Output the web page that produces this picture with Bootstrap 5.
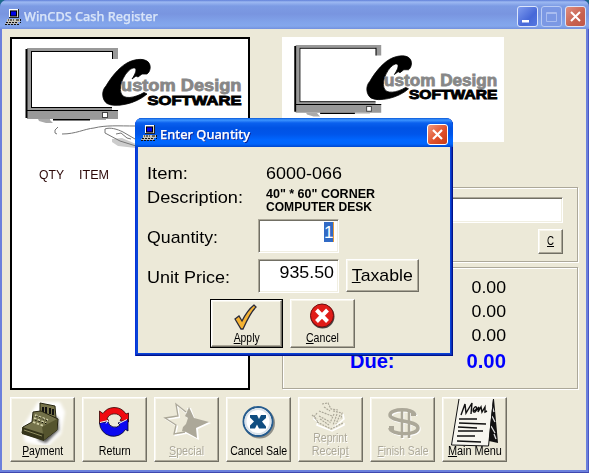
<!DOCTYPE html>
<html lang="en">
<head>
<meta charset="utf-8">
<title>WinCDS Cash Register</title>
<link href="https://cdn.jsdelivr.net/npm/bootstrap@5.3.0/dist/css/bootstrap.min.css" rel="stylesheet">
<style>
body{width:589px;height:473px;overflow:hidden;background:#1d6a8c;font-family:"Liberation Sans",Arial,sans-serif;font-size:17px;line-height:20px;color:#000}
.win{width:589px;height:473px;background:#6b80dc;border-radius:7px 7px 0 0;overflow:hidden;box-shadow:inset 0 -1px #3f48b0,inset -1px 0 #4a58c4}
.bar{height:29px;padding:0 3px 0 2px;background:linear-gradient(#5f7fd8 0,#9db9f2 2px,#7c9be4 6px,#7995e0 14px,#81a3ea 22px,#84a7ec 26px,#7391de 29px)}
.bar-icon{margin:4px 3px 0}
.cap{font-family:"Noto Sans","Open Sans",sans-serif;font-weight:500;font-size:13px;line-height:18px;margin-top:3px;color:#d8e4f8;-webkit-text-stroke:.25px currentColor}
.tbs{gap:3px}
.tb{width:21px;height:21px;border:1px solid #dbe5fb;border-radius:3px;background:linear-gradient(135deg,#7f9cee,#4668d8 60%,#5578e0)}
.tb.dim{background:#7b98e4;border-color:#b9cbf4}
.tb.x0{background:linear-gradient(135deg,#e08f80,#c7614f 60%,#c05848)}
.tb.x1{background:linear-gradient(135deg,#f0997e,#e0512c 55%,#c93a12);border-color:#fff}
.client{margin:0 3px 0 2px;width:584px;height:441px;background:#ece9d8;padding:8px}
.receipt{width:240px;height:353px;border:2px solid #000;background:#fff}
.side{width:296px}
.logo{width:222px;height:105px;background:#fff}
.etch{border:1px solid #aca899;box-shadow:1px 1px #fff,inset 1px 1px #fff}
.f1{height:75px;margin-top:45px;padding:9px 14px 0 0}
.f2{height:122px;margin-top:5px;padding:10px 71px 0 0}
.sunk{background:#fff;border:1px solid;border-color:#aca899 #fff #fff #aca899;box-shadow:inset 1px 1px #716f64,inset -1px -1px #f1efe2}
.raise{background:#ece9d8;border:1px solid;border-color:#fff #716f64 #716f64 #fff;box-shadow:inset -1px -1px #aca899,inset 1px 1px #f8f6ec;padding:1px;color:#000}
.fit{display:inline-block;white-space:nowrap;transform-origin:0 50%}
.mid .fit{transform-origin:50% 50%}
.end .fit{transform-origin:100% 50%}
.tools{gap:7px;margin-top:7px}
.tool{width:65px;height:65px}
.lab{font-size:12.5px;line-height:13px;height:13px}
.lab2{height:26px;margin-top:-13px}
.off{color:#aca899;text-shadow:1px 1px #fff}
.heads{padding:4px 0 0 27px;color:#2c0808}
.qty{width:40px}
.entry{height:26px}
.clr{width:25px;height:25px;margin-top:6px;padding-top:5px}
.sum{height:24px}
.due{color:#0000fe;font-weight:700;font-size:20px;padding:1px 0 0 67px}
u{text-underline-offset:1px;text-decoration-thickness:1px}
.dlg{position:absolute;left:135px;top:118px;width:318px;height:238px;background:#0843d8;border-radius:7px 7px 0 0;box-shadow:inset 1px 0 #0831d9,inset -1px -1px #00138c,inset -2px -2px #0a2fb8}
.dbar{height:29px;padding:0 5px 0 6px;border-radius:7px 7px 0 0;background:linear-gradient(#0a58d8 0,#3d95ff 2px,#0a60ee 5px,#0053e4 10px,#0055ea 16px,#0066ff 22px,#0065fc 26px,#0046cc 29px)}
.dbar .cap{margin-top:2px;color:#fff;text-shadow:1px 1px #0f1e8c}
.dbar-icon{margin:1px 3px 0 0}
.dcl{margin:0 3px;height:206px;background:#ece9d8;padding:17px 0 0 9px}
.r1{height:24px}
.r2{height:31px}
.r3{height:40px}
.nm{width:111px}
.r3 .nm{padding-top:9px}
.desc{font-size:12px;font-weight:700;line-height:13px;padding-left:8px}
.num{width:81px;height:34px;padding:3px 4px 2px}
.num.first{padding-top:2px}
.sel{background:#316ac5;color:#fff;width:10px;height:20px;line-height:21px;border-right:1px solid #e59a3a}
.taxb{margin-left:7px;width:73px;height:33px;padding-top:6px}
.acts{padding-left:63px;gap:7px}
.apply{border:1px solid #000;width:73px;height:49px;background:#000}
.apply .raise{width:71px;height:47px}
.cancel{width:65px;height:49px}
</style>
<script src="https://cdn.jsdelivr.net/npm/bootstrap@5.3.0/dist/js/bootstrap.bundle.min.js"></script>
</head>
<body>
<svg width="0" height="0" class="position-absolute">
<defs>
<symbol id="pc" viewBox="0 0 16 16"><path d="M4 0h10v9H4z" fill="#d4d0c8"/><path d="M4 0h9v1H5v8H4z" fill="#fff"/><path d="M5 1.500h7v6H5z" fill="#000"/><path d="M6 2.500h5v4H6z" fill="#0000e8"/><path d="M13 0h1v9H4v-1h9z" fill="#222"/><path d="M2 10h13v3H2z" fill="#c8c6bc"/><path d="M3 11h1m1 0h2m1 0h1m2 0h3" stroke="#000"/><path d="M1 13h12v2H0z" fill="#bbb"/><path d="M1 13.500h11M0 15.500h14M15.500 10v4" stroke="#111" stroke-dasharray="2 1"/></symbol>
<g id="brand">
<path d="M27 48h91v11h-6v-8H31v57h81v2h6v9H27z" fill="#999"/>
<path d="M25.500 49h2v69h-2zM31 51h81v1H32v55h80v1H31zM112 51h1v8h-1zM27 110h91v1H27z" fill="#000"/>
<path d="M102 112h6v6h-6z" fill="#444"/><path d="M103 113h4v4h-4z" fill="#fff"/>
<path d="M38 119h12v1l3 3H46l-7-2zM90 119h16v1H90z" fill="#aaa"/><path d="M53 119h37v1.500H53z"/>
<path d="M149.500 64C147 58 136 58 127 63C118 68 110 79 106 86C101 91 102 100 107 103.500C115 108 136 104 147 94L144 92.500C135 98 123 100 121 93C118 85 126 70 133 68C138 67 136 73 132 79L136 76L138 77L142 74H147C150 72 151 67 149.500 64z" stroke="#000" stroke-width=".8"/>
<text x="121" y="91" font-size="17" font-weight="700" textLength="120.500" lengthAdjust="spacingAndGlyphs" fill="#878787" stroke="#878787" stroke-width=".8">ustom Design</text>
<text x="147.500" y="105" font-size="13.500" font-weight="700" textLength="94" lengthAdjust="spacingAndGlyphs" stroke="#000" stroke-width=".9">SOFTWARE</text>
<path d="M112 139l10-1 14 6v4l-18-2-6-4z" fill="#ccc"/>
<path d="M58 127l-3 3v3l2 1M62 134c14 0 22-5 32-6 12-3 24-2 42-2M105 129c5-2 12 0 18 3l12 7M105 129v4l15 8 16 5M116 134l5-1 6 5 4 1" fill="none" stroke="#777"/>
</g>
</defs></svg>

<div class="win">
 <div class="bar d-flex align-items-center">
  <svg width="16" height="16" class="bar-icon"><use href="#pc"/></svg>
  <span class="cap"><span class="fit" data-w="134">WinCDS Cash Register</span></span>
  <div class="tbs d-flex ms-auto mt-1">
   <div class="tb"><svg width="19" height="19" class="d-block"><path d="M4 13h7v2.500H4z" fill="#fff"/></svg></div>
   <div class="tb dim"><svg width="19" height="19" class="d-block"><path d="M4.500 5.500h10v9h-10zM4.500 6.500h10" fill="none" stroke="#a9bdf0"/></svg></div>
   <div class="tb x0"><svg width="19" height="19" class="d-block"><path d="M5 5l9 9M14 5l-9 9" stroke="#fff" stroke-width="2"/></svg></div>
  </div>
 </div>
 <main class="client">
  <div class="d-flex justify-content-between">
   <section class="receipt">
    <svg width="236" height="126" viewBox="12 39 236 126" class="d-block"><use href="#brand"/></svg>
    <div class="heads d-flex lab">
     <span class="qty"><span class="fit" data-w="25">QTY</span></span><span class="fit" data-w="30">ITEM</span>
    </div>
   </section>
   <section class="side">
    <div class="logo"><svg width="222" height="105" viewBox="282 37 222 105" class="d-block"><use href="#brand" transform="translate(270.300 -.75) scale(.94 .953)"/></svg></div>
    <div class="etch f1"><div class="sunk entry"></div>
     <div class="raise lab clr ms-auto text-center mid"><span class="fit" data-w="7"><u>C</u></span></div></div>
    <div class="etch f2 text-end end">
     <div class="sum"><span class="fit" data-w="34.5">0.00</span></div>
     <div class="sum"><span class="fit" data-w="34.5">0.00</span></div>
     <div class="sum"><span class="fit" data-w="34.5">0.00</span></div>
     <div class="due d-flex justify-content-between"><span>Due:</span><span class="fit" data-w="39.5">0.00</span></div>
    </div>
   </section>
  </div>
  <nav class="tools d-flex mid">
   <div class="raise tool d-flex flex-column align-items-center">
    <svg width="61" height="46" viewBox="12 399 61 46"><defs><filter id="soft"><feGaussianBlur stdDeviation="1.500"/></filter></defs>
     <path d="M38 402h22l5 10-4 22-14 13-22-5-3-14z" fill="#fff" filter="url(#soft)"/><path d="M41 412l17 6 1 12-13 13-8-3z" fill="#555" filter="url(#soft)"/>
     <path d="M40 403l15 3 1 12-16-5z" fill="#77744b" stroke="#25240f"/><path d="M43 407v6M46 407v7M50 408v6M53 409v6" stroke="#111" stroke-width="2"/>
     <path d="M33 412l8-1 17 8-1 11-13 10-22-7 1-6 9-5z" fill="#74724a" stroke="#25240f"/>
     <path d="M42 427l15-8v11l-13 10z" fill="#55542e"/>
     <path d="M35 415l13 5M34 418l12 5M33 422l11 4" stroke="#d5d3aa" stroke-width="1.700" stroke-dasharray="2.500 1.500"/><path d="M36 416l12 5M35 420l12 4" stroke="#16150a" stroke-dasharray="1.500 2"/>
     <path d="M22 427l22 7v7l-22-7z" fill="#35341a"/><path d="M24 430l18 6" stroke="#8f8d60"/></svg>
    <div class="lab"><span class="fit" data-w="41"><u>P</u>ayment</span></div></div>
   <div class="raise tool d-flex flex-column align-items-center">
    <svg width="61" height="46" viewBox="84 399 61 46">
     <path d="M114 407.500A14 14 0 0 1 126 414L128.500 413V422L120 420.500L121.500 418A8 8 0 0 0 107 419L109 420.500L99.500 423V411L103 413.500A14 14 0 0 1 114 407.500z" fill="#f00b10" stroke="#300" stroke-width=".8"/>
     <path d="M99.500 423L108 421.500A7 7 0 0 0 120 425L118 423L128 419.500V431L125.500 429.500A14 14 0 0 1 99.500 423z" fill="#0c08f0" stroke="#002" stroke-width=".8"/><path d="M100 422.500l8-2-2 3M119 423.500l8-4" stroke="#fff" fill="none"/></svg>
    <div class="lab"><span class="fit" data-w="32">Return</span></div></div>
   <div class="raise tool d-flex flex-column align-items-center">
    <svg width="61" height="46" viewBox="156 399 61 46"><g fill="none" stroke="#fff" stroke-width="1.500" transform="translate(1.300 1.300)"><path d="M187 413l-11-9 2 12-13 2 11 7-2 9 11-2"/></g><path d="M186 407l4 0 4 11 16 4-13 6 1 11-12-6-3 0 1-6 4-9-3-2v-3l3-1z" fill="#fff" transform="translate(1 1)"/><path d="M189 407l5 11 15 4-13 6 1 10-11-6-4-1 1-4 3-3 2-6-3-2 2-4z" fill="#aca899"/><path d="M186 412l-10-8 2 12-13 2 11 7-2 9 11-2" fill="none" stroke="#aca899" stroke-width="1.300"/></svg>
    <div class="lab off"><span class="fit" data-w="35"><u>S</u>pecial</span></div></div>
   <div class="raise tool d-flex flex-column align-items-center">
    <svg width="61" height="46" viewBox="228 399 61 46"><circle cx="259.500" cy="423" r="15.500" fill="#8f8f88"/><circle cx="258" cy="421.500" r="14.500" fill="#fff" stroke="#265c8e" stroke-width="2"/><circle cx="258" cy="421.500" r="12.500" fill="none" stroke="#d9e2ea" stroke-width="2"/><path d="M250 415h7l2 4 2-4h5v3l-4 3.500 4 5v2h-7l-2-4-2 4h-5v-3l4-4-4-4z" fill="#0f4d80"/></svg>
    <div class="lab"><span class="fit" data-w="57">Cancel Sale</span></div></div>
   <div class="raise tool d-flex flex-column align-items-center">
    <svg width="61" height="46" viewBox="300 399 61 46"><path d="M314 415l-1 3 4 3-1 3 15 6 12-6v-2M342 413l1 5-11 9" fill="none" stroke="#fff" stroke-width="1.500" transform="translate(1 1)"/><g fill="none" stroke="#aca899" stroke-width="1.200" stroke-dasharray="2 1"><path d="M322 404l6-1 3 6 7 1M324 407l6 4M319 411l13 5M312 415l5 4M317 413l-3 4 4 5M319 416l11 6M320 419l9 6M317 422l14 7 12-6M333 411l9 2-1 6M334 414l-4 9M337 414l-4 11M340 415l-4 9"/></g></svg>
    <div class="lab lab2 off text-center"><span class="fit" data-w="34">Reprint</span><br><span class="fit" data-w="37">Receip<u>t</u></span></div></div>
   <div class="raise tool d-flex flex-column align-items-center">
    <svg width="61" height="46" viewBox="372 399 61 46"><g fill="none" stroke="#fff" transform="translate(1 1)"><path d="M415 415c-1-7-25-7-25 0 0 7 28 5 28 13 0 8-28 7-28 0" stroke-width="3.500"/><path d="M402 409v29M409 409v29" stroke-width="2.500"/></g><g fill="none" stroke="#aca899"><path d="M415 415c-1-7-25-7-25 0 0 7 28 5 28 13 0 8-28 7-28 0" stroke-width="3.500"/><path d="M402 409v29M409 409v29" stroke-width="2.500"/></g><path d="M389 426h5v4h-5zM411 413h5v3h-5z" fill="#aca899"/></svg>
    <div class="lab off"><span class="fit" data-w="51"><u>F</u>inish Sale</span></div></div>
   <div class="raise tool d-flex flex-column align-items-center">
    <svg width="61" height="46" viewBox="444 399 61 46" overflow="visible"><path d="M490 400l4-1 4 44-9-2z" fill="#111"/><path d="M492 406l2 6M492 416l3 6M491 426l4 7M494 434l2 5" stroke="#ddd" stroke-width="1.300"/><path d="M459 399h34l-5 47-37-1z" fill="#f7f6ef"/><path d="M459 399l-7.500 46 37 1 5-47" fill="none" stroke="#111"/><path d="M461 415l4-11 1 9 6-10-1 11M473 411c5-1 4-5 2-4-3 2-2 6 0 5l4-5-1 5 3-5 1 5 3-5v5l2-1" fill="none" stroke="#111" stroke-width="1.400"/><path d="M459 419h18M459 423l27 1M458 427l19 1M458 431h25M457 436h18M457 441l24 1" stroke="#111" stroke-width="1.300"/></svg>
    <div class="lab"><span class="fit" data-w="54"><u>M</u>ain Menu</span></div></div>
  </nav>
 </main>
</div>

<div class="dlg">
 <div class="dbar d-flex align-items-center">
  <svg width="16" height="16" class="dbar-icon"><use href="#pc"/></svg>
  <span class="cap"><span class="fit" data-w="90">Enter Quantity</span></span>
  <div class="tb x1 ms-auto mt-1"><svg width="19" height="19" class="d-block"><path d="M5 5l9 9M14 5l-9 9" stroke="#fff" stroke-width="2.200"/></svg></div>
 </div>
 <div class="dcl">
  <div class="d-flex r1"><span class="nm"><span class="fit" data-w="41">Item:</span></span><span class="fit ms-2" data-w="76">6000-066</span></div>
  <div class="d-flex r2"><span class="nm"><span class="fit" data-w="96">Description:</span></span>
   <div class="desc"><span class="fit" data-w="109">40" * 60" CORNER</span><br><span class="fit" data-w="106">COMPUTER DESK</span></div></div>
  <div class="d-flex r3"><span class="nm"><span class="fit" data-w="71">Quantity:</span></span>
   <div class="sunk num first d-flex justify-content-end"><span class="sel">1</span></div></div>
  <div class="d-flex r3"><span class="nm"><span class="fit" data-w="83">Unit Price:</span></span>
   <div class="sunk num text-end end"><span class="fit" data-w="54.5">935.50</span></div>
   <div class="raise taxb text-center mid"><span class="fit" data-w="61"><u>T</u>axable</span></div></div>
  <div class="acts d-flex mid">
   <div class="apply"><div class="raise d-flex flex-column align-items-center">
    <svg width="61" height="30" viewBox="216 302 61 30"><path d="M235 319l4-3 3 5c3-6 7-12 12-16l2 2c-5 5-9 13-13 22h-2z" fill="#f4b233" stroke="#2a2a38" stroke-width="1.300"/></svg>
    <div class="lab"><span class="fit" data-w="26"><u>A</u>pply</span></div></div></div>
   <div class="raise cancel d-flex flex-column align-items-center">
    <svg width="61" height="31" viewBox="292 301 61 31"><circle cx="322.500" cy="316.500" r="12" fill="#444"/><circle cx="322" cy="315.500" r="11.500" fill="#e01c18" stroke="#701010"/><path d="M316.500 310l11 11.500M327.500 310l-11 11.500" stroke="#fff" stroke-width="4"/></svg>
    <div class="lab"><span class="fit" data-w="33"><u>C</u>ancel</span></div></div>
  </div>
 </div>
</div>
<script>
// Condense or widen each caption to its set width.
document.querySelectorAll('.fit[data-w]').forEach(function(e){
  e.style.transform='scaleX('+(e.dataset.w/e.getBoundingClientRect().width)+')';
});
</script>
</body>
</html>
